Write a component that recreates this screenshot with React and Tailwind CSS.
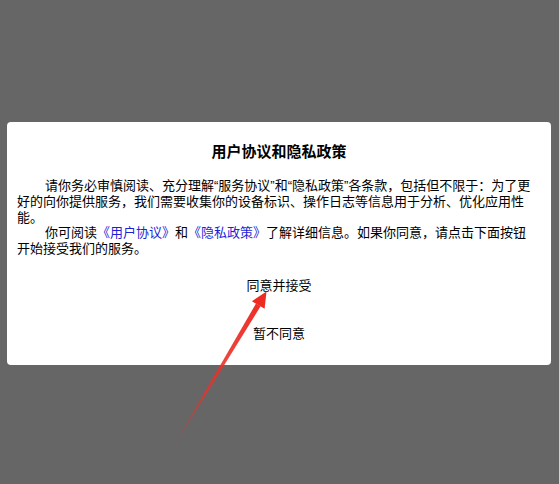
export default function App() {
  const font = { fontFamily: '"Liberation Sans", "Noto Sans CJK SC", sans-serif' };
  return (
    <div className="relative h-[484px] w-[559px] overflow-hidden bg-[#666666] pt-[122px]" style={font}>
      <div className="ml-[7px] flex w-[544px] flex-col rounded-[4px] bg-white pb-[7px] pt-[20px] text-black">
        <h1 className="text-center text-[15px] font-bold leading-[20px]">用户协议和隐私政策</h1>
        <div className="mt-[16px] break-all pl-[10px] pr-[17px] text-[13px] leading-[15.75px]">
          <p className="indent-[28px]">
            请你务必审慎阅读、充分理解“服务协议”和“隐私政策”各条款，包括但不限于：为了更好的向你提供服务，我们需要收集你的设备标识、操作日志等信息用于分析、优化应用性能。
          </p>
          <p className="indent-[28px]">
            你可阅读<span className="text-[#1f1fd6]">《用户协议》</span>和<span className="text-[#1f1fd6]">《隐私政策》</span>了解详细信息。如果你同意，请点击下面按钮开始接受我们的服务。
          </p>
        </div>
        <button className="mt-[5px] flex h-[48px] items-center justify-center text-[13px] text-black">同意并接受</button>
        <button className="flex h-[48px] items-center justify-center text-[13px] text-black">暂不同意</button>
      </div>
      <svg className="pointer-events-none absolute left-0 top-0" width="559" height="484" viewBox="0 0 559 484">
        <defs>
          <linearGradient id="arrowFade" gradientUnits="userSpaceOnUse" x1="174" y1="444" x2="266" y2="292">
            <stop offset="0" stopColor="#e8332a" stopOpacity="0" />
            <stop offset="0.35" stopColor="#e8332a" stopOpacity="0.85" />
            <stop offset="1" stopColor="#ee2a22" stopOpacity="1" />
          </linearGradient>
        </defs>
        <polygon points="174.5,444.3 175.5,443.7 260.6,306.3 256.0,303.5" fill="url(#arrowFade)" />
        <polygon points="266.5,291.5 264.6,308.8 251.9,301.2" fill="#ee2a22" />
      </svg>
    </div>
  );
}
